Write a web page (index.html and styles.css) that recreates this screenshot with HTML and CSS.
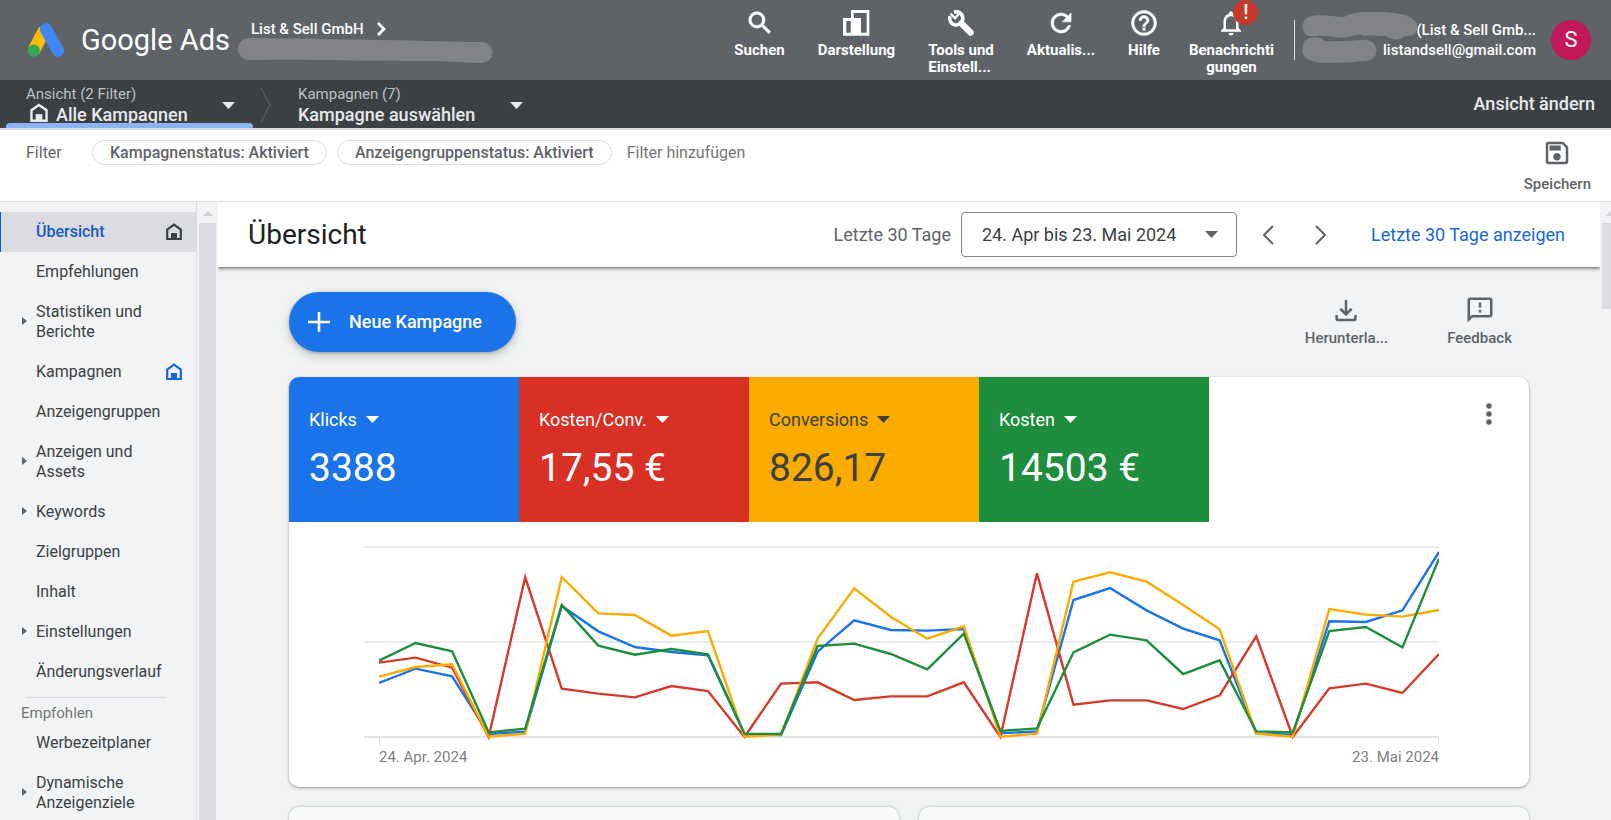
FILE: index.html
```html
<!DOCTYPE html>
<html lang="de">
<head>
<meta charset="utf-8">
<title>Übersicht – Google Ads</title>
<link rel="stylesheet" href="styles.css">
</head>
<body>
<svg class="defs" aria-hidden="true">
  <symbol id="home" viewBox="0 0 18 18"><path d="M2.200 16V6.500L9 1.700 15.800 6.500V16z" fill="none" stroke="currentColor" stroke-width="2.200"/><path d="M6 10h6v6H6z" fill="currentColor"/></symbol>
  <symbol id="caret" viewBox="0 0 13 7"><path d="M0 0h13L6.500 7z" fill="currentColor"/></symbol>
</svg>

<header class="topbar">
  <a class="brand" href="#">
    <svg class="brand-logo" viewBox="82 66 112 102" aria-hidden="true">
      <path d="M134 86L101 149" stroke="#fbbc04" stroke-width="38"/>
      <path d="M138 85L174 149" stroke="#4285f4" stroke-width="37" stroke-linecap="round"/>
      <circle cx="101" cy="149" r="18.500" fill="#34a853"/>
    </svg>
    <span class="brand-name">Google Ads</span>
  </a>
  <div class="org">
    <a class="org-name" href="#">List &amp; Sell GmbH
      <svg width="10" height="14" viewBox="0 0 10 14" aria-hidden="true"><path d="M2 1l6 6-6 6" fill="none" stroke="currentColor" stroke-width="2.600"/></svg>
    </a>
    <svg class="org-mask" viewBox="0 0 257 26" aria-hidden="true"><path d="M12 0C60 1 120 1 230 4h15a10 10 0 0 1 0 21c-20 0-30-2-50-2C130 23 80 21 12 22A11 11 0 0 1 12 0z" fill="#828387"/></svg>
  </div>
  <nav class="tools">
    <button class="tool"><svg viewBox="0 0 24 24"><path stroke="currentColor" stroke-width=".5" d="M15.500 14h-.79l-.28-.27A6.471 6.471 0 0 0 16 9.500 6.500 6.500 0 1 0 9.500 16c1.610 0 3.090-.59 4.230-1.570l.27.28v.79l5 4.990L20.490 19l-4.990-5zm-6 0C7.010 14 5 11.990 5 9.500S7.010 5 9.500 5 14 7.010 14 9.500 11.990 14 9.500 14z"/></svg><span>Suchen</span></button>
    <button class="tool"><svg viewBox="-2 -2 30 30"><path fill-rule="evenodd" d="M0 8h8V0h18.300v25.700H0zM3.300 11v11.700h4.400V11zM10.700 3v5H18v14.700h5.700V3z"/></svg><span>Darstellung</span></button>
    <button class="tool tool-left"><svg viewBox="14 8 30 30"><g fill="none" stroke="currentColor"><path d="M22 12.200a6.600 6.600 0 1 1-4 4" stroke-width="3.600"/><path d="M18.500 13.500l4.500 4.700 3.500-4" stroke-width="2.400"/><path d="M29.500 23.500l9 9" stroke-width="6.500" stroke-linecap="round"/></g></svg><span>Tools und<br>Einstell...</span></button>
    <button class="tool"><svg viewBox="0 0 24 24"><path stroke="currentColor" stroke-width=".5" d="M17.650 6.350A7.958 7.958 0 0 0 12 4a8 8 0 1 0 7.730 10h-2.080A5.990 5.990 0 1 1 12 6c1.660 0 3.140.69 4.220 1.780L13 11h7V4l-2.350 2.350z"/></svg><span>Aktualis...</span></button>
    <button class="tool"><svg viewBox="0 0 24 24"><path stroke="currentColor" stroke-width=".4" d="M11 18h2v-2h-2v2zm1-16C6.480 2 2 6.480 2 12s4.480 10 10 10 10-4.480 10-10S17.520 2 12 2zm0 18c-4.410 0-8-3.590-8-8s3.590-8 8-8 8 3.590 8 8-3.590 8-8 8zm0-14a4 4 0 0 0-4 4h2a2 2 0 1 1 4 0c0 2-3 1.750-3 5h2c0-2.250 3-2.500 3-5a4 4 0 0 0-4-4z"/></svg><span>Hilfe</span></button>
    <button class="tool tool-bell"><svg viewBox="0 0 24 24"><path d="M12 22c1.100 0 2-.9 2-2h-4c0 1.100.9 2 2 2zm6-6v-5c0-3.070-1.630-5.640-4.500-6.320V4c0-.83-.67-1.500-1.500-1.500s-1.500.67-1.500 1.500v.68C7.640 5.360 6 7.920 6 11v5l-2 2v1h16v-1l-2-2zm-2 1H8v-6c0-2.480 1.510-4.500 4-4.500s4 2.020 4 4.500v6z"/></svg><i class="badge">!</i><span>Benachrichti<br>gungen</span></button>
  </nav>
  <div class="account">
    <svg class="account-mask" width="120" height="54" viewBox="0 0 120 54" aria-hidden="true"><path d="M10 5c14-2 22 1 33 1C54 0 62 1 76 1c16 0 36 2 40 12 1 8-2 13-12 12-6 5-14 4-19 0-10 0-16-1-22 0-6-4-16 4-30 1-10-2-20 0-26-1A11 11 0 0 1 10 5z"/><path d="M9 27c7-2 12 0 14 3 10 1 30-1 42-1a10 10 0 0 1 0 21c-14 1-36 3-50 1C2 48 0 42 2 36c0-5 2-8 7-9z"/></svg>
    <span>(List &amp; Sell Gmb...</span>
    <span>listandsell@gmail.com</span>
  </div>
  <button class="avatar" aria-label="Konto">S</button>
</header>

<div class="scopebar">
  <button class="scope scope-active">
    <span class="scope-text"><small>Ansicht (2 Filter)</small><b><svg class="scope-home" aria-hidden="true"><use href="#home"/></svg>Alle Kampagnen</b></span>
    <svg class="caret"><use href="#caret"/></svg>
  </button>
  <svg class="scope-sep" viewBox="0 0 12 36" aria-hidden="true"><path d="M1 1l9 17-9 17" fill="none" stroke="#5f6368"/></svg>
  <button class="scope">
    <span class="scope-text"><small>Kampagnen (7)</small><b>Kampagne auswählen</b></span>
    <svg class="caret"><use href="#caret"/></svg>
  </button>
  <a class="scope-change" href="#">Ansicht ändern</a>
</div>

<section class="filters">
  <span class="filters-label">Filter</span>
  <button class="chip">Kampagnenstatus: Aktiviert</button>
  <button class="chip">Anzeigengruppenstatus: Aktiviert</button>
  <button class="filters-add">Filter hinzufügen</button>
  <button class="action filters-save"><svg viewBox="0 0 24 24"><path d="M17 3H5a2 2 0 0 0-2 2v14c0 1.100.89 2 2 2h14c1.100 0 2-.9 2-2V7l-4-4zm2 16H5V5h11.170L19 7.830V19zm-7-7c-1.660 0-3 1.340-3 3s1.340 3 3 3 3-1.340 3-3-1.340-3-3-3zM6 6h9v4H6V6z"/></svg><span>Speichern</span></button>
</section>

<div class="workspace">
  <nav class="sidebar">
    <a class="item item-current" href="#">Übersicht<svg class="item-home"><use href="#home"/></svg></a>
    <a class="item" href="#">Empfehlungen</a>
    <a class="item item-parent" href="#">Statistiken und Berichte</a>
    <a class="item" href="#">Kampagnen<svg class="item-home"><use href="#home"/></svg></a>
    <a class="item" href="#">Anzeigengruppen</a>
    <a class="item item-parent" href="#">Anzeigen und Assets</a>
    <a class="item item-parent" href="#">Keywords</a>
    <a class="item" href="#">Zielgruppen</a>
    <a class="item" href="#">Inhalt</a>
    <a class="item item-parent" href="#">Einstellungen</a>
    <a class="item" href="#">Änderungsverlauf</a>
    <hr>
    <h2 class="group">Empfohlen</h2>
    <a class="item" href="#">Werbezeitplaner</a>
    <a class="item item-parent" href="#">Dynamische Anzeigenziele</a>
  </nav>
  <div class="scroll" aria-hidden="true"><i></i></div>

  <main class="main">
    <div class="titlebar">
      <h1>Übersicht</h1>
      <label for="range">Letzte 30 Tage</label>
      <span class="range"><select id="range"><option>24. Apr bis 23. Mai 2024</option></select><svg class="caret"><use href="#caret"/></svg></span>
      <button class="step" aria-label="Zurück"><svg viewBox="0 0 14 20"><path d="M12 1L3 10l9 9"/></svg></button>
      <button class="step" aria-label="Weiter"><svg viewBox="0 0 14 20"><path d="M2 1l9 9-9 9"/></svg></button>
      <a class="show" href="#">Letzte 30 Tage anzeigen</a>
    </div>

    <div class="page">
      <div class="actions">
        <button class="create"><svg viewBox="0 0 22 22"><path d="M11 1v20M0 11h22" stroke="#fff" stroke-width="2.600"/></svg>Neue Kampagne</button>
        <button class="action"><svg viewBox="0 0 24 24"><path d="M12 4v11M7.500 11l4.500 4.500 4.500-4.500M4.500 16v3q0 1 1 1h13q1 0 1-1v-3" fill="none" stroke="currentColor" stroke-width="2"/></svg><span>Herunterla...</span></button>
        <button class="action"><svg viewBox="0 0 24 24"><path d="M20 2H4.010c-1.100 0-2 .9-2 2L2 22l4-4h14c1.100 0 2-.9 2-2V4c0-1.100-.9-2-2-2zm0 14H5.170L4 17.170V4h16v12zM11 12h2v2h-2zM11 6h2v4h-2z"/></svg><span>Feedback</span></button>
      </div>

      <section class="card">
        <div class="metrics">
          <button class="metric blue"><span>Klicks<svg class="caret"><use href="#caret"/></svg></span><strong>3388</strong></button>
          <button class="metric red"><span>Kosten/Conv.<svg class="caret"><use href="#caret"/></svg></span><strong>17,55 €</strong></button>
          <button class="metric yellow"><span>Conversions<svg class="caret"><use href="#caret"/></svg></span><strong>826,17</strong></button>
          <button class="metric green"><span>Kosten<svg class="caret"><use href="#caret"/></svg></span><strong>14503 €</strong></button>
          <button class="more" aria-label="Mehr"><svg viewBox="0 0 6 22"><circle cx="3" cy="3" r="2.700"/><circle cx="3" cy="11" r="2.700"/><circle cx="3" cy="19" r="2.700"/></svg></button>
        </div>
        <div class="chart">
          <div class="plot">
            <svg viewBox="0 0 29 570" preserveAspectRatio="none" role="img" aria-label="Verlauf vom 24. April bis 23. Mai 2024">
              <polyline stroke="#1a73e8" points="0,408 1,365 2,388 3,561 4,554 5,177 6,253 7,300 8,315 9,325 10,562 11,564 12,314 13,220 14,249 15,251 16,246 17,559 18,553 19,159 20,123 21,190 22,245 23,280 24,560 25,563 26,223 27,225 28,190 29,15"/>
              <polyline stroke="#d33b2d" points="0,347 1,332 2,362 3,570 4,91 5,425 6,440 7,451 8,417 9,432 10,570 11,410 12,406 13,459 14,448 15,448 16,406 17,570 18,79 19,473 20,460 21,460 22,486 23,445 24,268 25,570 26,424 27,410 28,438 29,321"/>
              <polyline stroke="#f9ab00" points="0,389 1,360 2,352 3,569 4,560 5,90 6,199 7,204 8,266 9,252 10,569 11,563 12,275 13,124 14,209 15,275 16,238 17,569 18,560 19,104 20,76 21,104 22,174 23,247 24,560 25,569 26,186 27,203 28,209 29,189"/>
              <polyline stroke="#1e8e3e" points="0,341 1,288 2,313 3,556 4,545 5,174 6,296 7,323 8,306 9,322 10,560 11,561 12,297 13,290 14,321 15,367 16,260 17,552 18,544 19,316 20,263 21,280 22,381 23,340 24,553 25,556 26,252 27,240 28,301 29,35"/>
            </svg>
          </div>
          <div class="axis"><span>24. Apr. 2024</span><span>23. Mai 2024</span></div>
        </div>
      </section>

      <div class="pair"><section class="panel"></section><section class="panel"></section></div>
    </div>
  </main>
  <div class="scroll scroll-page" aria-hidden="true"><i></i></div>
</div>
</body>
</html>
```
FILE: styles.css
```css
* { box-sizing: border-box; }
body {
  margin: 0;
  height: 100vh;
  display: flex;
  flex-direction: column;
  overflow: hidden;
  font: 16px/20px Roboto, sans-serif;
  color: #3c4043;
  background: #fff;
}
button {
  border: 0;
  padding: 0;
  background: none;
  color: inherit;
  font: inherit;
  cursor: pointer;
}
a { color: inherit; text-decoration: none; }
svg { display: block; flex: none; fill: currentColor; }
.defs { position: absolute; width: 0; height: 0; }
.caret { width: 13px; height: 7px; }

/* top bar */
.topbar {
  flex: none;
  height: 80px;
  display: flex;
  align-items: flex-start;
  padding-right: 20px;
  background: #5f6368;
  color: #fff;
}
.brand { display: flex; align-items: center; gap: 16px; height: 80px; padding-left: 27px; }
.brand-logo { width: 38px; height: 34px; }
.brand-name { font-size: 29px; line-height: 36px; }
.org { width: 257px; margin-left: 7px; padding-top: 20px; }
.org-name { display: flex; align-items: center; gap: 12px; padding-left: 14px; line-height: 18px; font-weight: 500; font-size: 15px; }
.org-mask { width: 257px; height: 26px; }
.tools { display: flex; align-items: flex-start; gap: 33px; margin-left: auto; }
.tool { position: relative; padding-top: 8px; font-size: 15px; font-weight: 700; line-height: 17px; }
.tool svg { width: 30px; height: 30px; margin: 0 auto 4px; }
.tool span { display: block; }
.tool-left span { text-align: left; }
.tool-bell { margin-left: -4px; }
.badge {
  position: absolute;
  top: 0;
  left: calc(50% + 2px);
  width: 25px;
  height: 25px;
  border-radius: 50%;
  background: #c5392a;
  font-style: normal;
  font-weight: 500;
  font-size: 20px;
  line-height: 25px;
}
.account {
  position: relative;
  display: flex;
  flex-direction: column;
  align-items: flex-end;
  width: 242px;
  height: 40px;
  margin: 20px 15px 0 20px;
  border-left: 1px solid #dadce0;
  font-size: 15px;
  font-weight: 500;
}
.account-mask { position: absolute; left: 6px; top: -9px; fill: #828387; }
.avatar {
  width: 40px;
  height: 40px;
  margin-top: 20px;
  border-radius: 50%;
  background: #c2185b;
  font-size: 22px;
}

/* scope bar */
.scopebar {
  flex: none;
  height: 50px;
  display: flex;
  align-items: flex-start;
  padding: 0 16px 0 6px;
  border-bottom: 2px solid #dadce0;
  background: #3c4043;
  color: #e8eaed;
}
.scope { display: flex; align-items: center; height: 48px; text-align: left; }
.scope-text { flex: 1; }
.scope small { display: block; font-size: 15px; line-height: 20px; color: #bdc1c6; }
.scope b { display: flex; gap: 7px; font-size: 18px; line-height: 22px; font-weight: 500; }
.scope:not(.scope-active) { gap: 35px; padding-left: 26px; padding-top: 2px; }
.scope-active {
  width: 247px;
  padding: 3px 18px 0 20px;
  overflow: hidden;
  position: relative;
}
.scope-active small { line-height: 18px; }
.scope-active b { line-height: 24px; }
.scope-active::after {
  content: "";
  position: absolute;
  inset: auto 0 0;
  height: 5px;
  border-radius: 4px 4px 0 0;
  background: #8ab4f8;
}
.scope-home { width: 20px; height: 20px; margin-left: 3px; }
.scope-sep { width: 12px; height: 36px; margin: 7px 0 0 7px; }
.scope-change { margin-left: auto; font-size: 18px; line-height: 48px; font-weight: 500; }

/* filters */
.filters {
  flex: none;
  height: 72px;
  display: flex;
  align-items: flex-start;
  padding: 10px 20px 0 26px;
  border-bottom: 1px solid #dadce0;
  color: #5f6368;
}
.filters-label { width: 66px; line-height: 25px; }
.chip {
  height: 25px;
  margin-right: 10px;
  padding: 0 17px;
  border: 1px solid #dadce0;
  border-radius: 13px;
  line-height: 23px;
  font-weight: 500;
}
.filters-add { margin-left: 5px; line-height: 25px; color: #757575; }
.action { font-size: 15px; font-weight: 500; color: #5f6368; }
.action svg { width: 30px; height: 30px; margin: 0 auto; }
.action span { display: block; line-height: 26px; }
.filters-save { margin-left: auto; margin-top: -2px; }
.filters-save span { line-height: 32px; }

/* workspace */
.workspace { flex: 1; min-height: 0; display: flex; overflow: hidden; background: #f1f3f4; }
.sidebar {
  flex: none;
  width: 197px;
  padding-top: 10px;
  border-right: 1px solid #dadce0;
  overflow: hidden;
}
.item {
  position: relative;
  display: flex;
  align-items: center;
  justify-content: space-between;
  padding: 10px 13px 10px 36px;
}
.item-parent { padding-right: 40px; }
.item-parent::before {
  content: "";
  position: absolute;
  left: 22px;
  top: calc(50% - 5px);
  border: 4px solid transparent;
  border-left: 5px solid #5f6368;
  border-right: 0;
}
.item-home { width: 18px; height: 18px; color: #1967d2; }
.item-current { padding-left: 35px; border-left: 1px solid #185abc; background: #dadce0; color: #185abc; font-weight: 500; }
.item-current .item-home { color: #3c4043; }
.sidebar hr { margin: 5px 30px 5px 26px; border: 0; border-top: 1px solid #dadce0; }
.group { margin: 0 0 0 21px; font-size: 15px; line-height: 20px; font-weight: 400; color: #757575; }

.scroll { flex: none; width: 21px; padding: 21px 2px 0; position: relative; }
.scroll::before {
  content: "";
  position: absolute;
  top: 9px;
  left: 6px;
  border: 5px solid transparent;
  border-bottom-color: #cfd1d4;
  border-top: 0;
}
.scroll i { display: block; width: 17px; height: 100%; background: #dadce0; }
.scroll-page { width: 11px; overflow: hidden; }
.scroll-page i { height: 86px; }

.main { flex: 1; min-width: 0; overflow: hidden; }
.titlebar {
  position: relative;
  height: 65px;
  display: flex;
  align-items: center;
  padding: 0 35px 0 30px;
  background: #fff;
  box-shadow: 0 1px 4px rgba(0, 0, 0, .7);
  clip-path: inset(0 0 -8px 0);
}
.titlebar h1 { margin: 0 auto 0 0; font-size: 28px; line-height: 36px; font-weight: 400; color: #202124; }
.titlebar label { margin-right: 10px; font-size: 18px; color: #5f6368; }
.range { position: relative; width: 276px; margin-right: 24px; }
.range select {
  appearance: none;
  display: block;
  width: 100%;
  height: 45px;
  padding: 0 20px;
  border: 1px solid #80868b;
  border-radius: 4px;
  background: #fff;
  color: #3c4043;
  font: 18px/22px Roboto, sans-serif;
}
.range .caret { position: absolute; right: 19px; top: 19px; color: #5f6368; }
.step { margin-right: 39px; }
.step svg { width: 14px; height: 20px; fill: none; stroke: #5f6368; stroke-width: 2; }
.show { margin-left: 4px; font-size: 18px; color: #1967d2; }

.page { padding: 25px 71px 0; }
.actions { display: flex; align-items: flex-start; gap: 59px; padding-right: 17px; }
.create {
  display: flex;
  align-items: center;
  gap: 19px;
  height: 60px;
  margin-right: auto;
  padding: 0 34px 0 19px;
  border-radius: 30px;
  background: #1a73e8;
  box-shadow: 0 1px 3px rgba(60, 64, 67, .3), 0 4px 10px rgba(60, 64, 67, .25);
  color: #fff;
  font-size: 18px;
  font-weight: 500;
}
.create svg { width: 22px; height: 22px; }
.actions .action { padding-top: 3px; }

.card {
  margin-top: 25px;
  border-radius: 10px;
  overflow: hidden;
  background: #fff;
  box-shadow: 0 1px 3px rgba(60, 64, 67, .5);
}
.metrics { display: flex; }
.metric {
  width: 230px;
  height: 145px;
  padding: 0 20px;
  text-align: left;
  color: #fff;
}
.metric span { display: flex; align-items: center; gap: 9px; font-size: 18px; line-height: 22px; }
.metric strong { display: block; margin-top: 14px; font-size: 39px; line-height: 46px; font-weight: 400; }
.blue { background: #1a73e8; }
.red { background: #d93025; }
.yellow { background: #f9ab00; color: #3c4043; }
.green { background: #1e8e3e; }
.more { align-self: flex-start; margin: 26px 37px 0 auto; color: #5f6368; }
.more svg { width: 6px; height: 22px; }
.chart { padding: 24px 90px 20px 75px; }
.plot {
  height: 192px;
  padding: 1px 0 1px 15px;
  background:
    linear-gradient(#e8eaed, #e8eaed) 0 0 / 100% 2px no-repeat,
    linear-gradient(#e8eaed, #e8eaed) 0 50% / 100% 2px no-repeat,
    linear-gradient(#e3e4e6, #e3e4e6) 0 100% / 100% 2px no-repeat;
}
.plot svg { width: 100%; height: 190px; overflow: visible; clip-path: inset(-4px 0); }
.plot polyline { fill: none; stroke-width: 2.4; vector-effect: non-scaling-stroke; }
.axis {
  display: flex;
  justify-content: space-between;
  margin-left: 15px;
  padding-top: 9px;
  font-size: 15px;
  color: #808080;
  background:
    linear-gradient(#dadce0, #dadce0) 0 0 / 1px 7px no-repeat,
    linear-gradient(#dadce0, #dadce0) 100% 0 / 1px 7px no-repeat;
}
.pair { display: grid; grid-template-columns: 1fr 1fr; gap: 20px; margin-top: 20px; }
.panel { height: 200px; border-radius: 10px; background: #f8f9fa; box-shadow: 0 0 3px rgba(60, 64, 67, .4); }
```
